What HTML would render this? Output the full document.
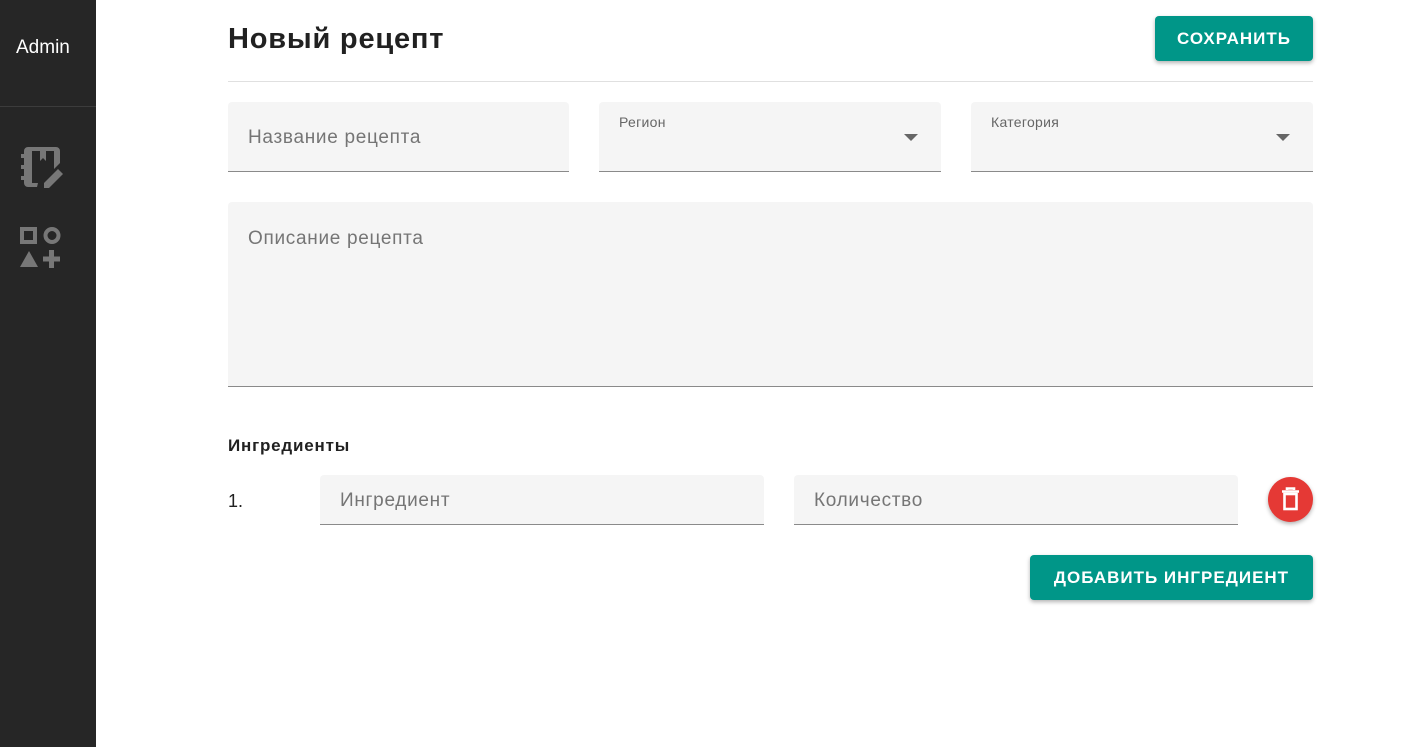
<!DOCTYPE html>
<html><head><meta charset="utf-8"><style>
*{box-sizing:border-box;margin:0;padding:0}
body{width:1426px;height:747px;background:#fff;font-family:"Liberation Sans",sans-serif;position:relative;overflow:hidden}
.side{position:absolute;left:0;top:0;width:96px;height:747px;background:#262626}
.side .admin{color:#fff;font-size:19px;position:absolute;left:16px;top:37px}
.side .hr{position:absolute;top:106px;left:0;width:96px;height:1px;background:#3c3c3c}
.abs{position:absolute}
.field{position:absolute;background:#f5f5f5;border-bottom:1px solid #8a8a8a;border-radius:4px 4px 0 0}
.ph{position:absolute;color:#757575;font-size:19px;letter-spacing:0.7px}
.lbl{position:absolute;color:#666;font-size:14px;letter-spacing:0.3px}
.btn{position:absolute;background:#009688;color:#fff;font-weight:bold;font-size:17px;letter-spacing:1px;border-radius:4px;box-shadow:0 2px 4px rgba(0,0,0,.3);display:flex;align-items:center;justify-content:center}
.arrow{position:absolute;width:0;height:0;border-left:7px solid transparent;border-right:7px solid transparent;border-top:7px solid #666}
</style></head><body>
<div class="side"><div class="admin">Admin</div><div class="hr"></div>
<svg class="abs" style="left:20px;top:145px" width="45" height="45" viewBox="0 0 45 45" fill="#777">
<path d="M8 2h28a4 4 0 0 1 4 4v12l-6 6V6h-8v10l-3-3-3 3V6h-8v32h6l-1 4H8a4 4 0 0 1-4-4V6a4 4 0 0 1 4-4z"/>
<rect x="1" y="9" width="6" height="4"/><rect x="1" y="20" width="6" height="4"/><rect x="1" y="31" width="6" height="4"/>
<path d="M38 24l5 5-14 14h-5v-5z"/></svg>
<svg class="abs" style="left:19px;top:225px" width="45" height="45" viewBox="0 0 45 45" fill="#777">
<path d="M1 2h17v17H1zM5 6v9h9V6z" fill-rule="evenodd"/>
<circle cx="33" cy="10.5" r="6.5" fill="none" stroke="#777" stroke-width="4"/>
<path d="M10 26l9 16H1z"/><rect x="30" y="25" width="5" height="18"/><rect x="24" y="31.5" width="17" height="5"/></svg>
</div>
<div class="abs" style="left:228px;top:23px;font-size:29px;font-weight:bold;color:#212121;letter-spacing:0.8px">Новый рецепт</div>
<div class="btn" style="left:1155px;top:16px;width:158px;height:45px">СОХРАНИТЬ</div>
<div class="abs" style="left:228px;top:81px;width:1085px;height:1px;background:#e0e0e0"></div>
<div class="field" style="left:228px;top:102px;width:341px;height:70px"><div class="ph" style="left:20px;top:25px">Название рецепта</div></div>
<div class="field" style="left:599px;top:102px;width:342px;height:70px"><div class="lbl" style="left:20px;top:12px">Регион</div><div class="arrow" style="left:305px;top:32px"></div></div>
<div class="field" style="left:971px;top:102px;width:342px;height:70px"><div class="lbl" style="left:20px;top:12px">Категория</div><div class="arrow" style="left:305px;top:32px"></div></div>
<div class="field" style="left:228px;top:202px;width:1085px;height:185px"><div class="ph" style="left:20px;top:26px">Описание рецепта</div></div>
<div class="abs" style="left:228px;top:436px;font-size:17px;font-weight:bold;color:#212121;letter-spacing:0.8px">Ингредиенты</div>
<div class="abs" style="left:228px;top:491px;font-size:18px;color:#212121">1.</div>
<div class="field" style="left:320px;top:475px;width:444px;height:50px"><div class="ph" style="left:20px;top:15px">Ингредиент</div></div>
<div class="field" style="left:794px;top:475px;width:444px;height:50px"><div class="ph" style="left:20px;top:15px">Количество</div></div>
<div class="abs" style="left:1268px;top:477px;width:45px;height:45px;border-radius:50%;background:#e53935;box-shadow:0 2px 4px rgba(0,0,0,.3)">
<svg width="45" height="45" viewBox="0 0 45 45" fill="none" stroke="#fff" stroke-width="2.6"><path d="M14 14.5h17M19 13v-1.5h7V13"/><rect x="16.5" y="17" width="12" height="15"/></svg></div>
<div class="btn" style="left:1030px;top:555px;width:283px;height:45px">ДОБАВИТЬ ИНГРЕДИЕНТ</div>
</body></html>
